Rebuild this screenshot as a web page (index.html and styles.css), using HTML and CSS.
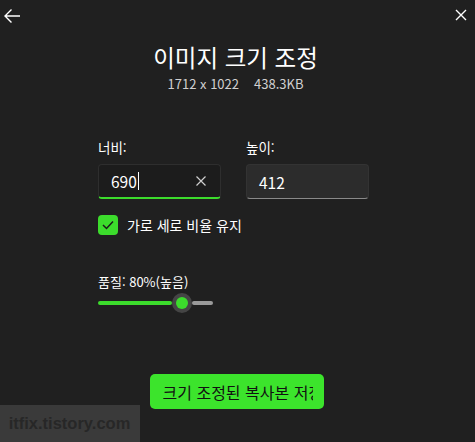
FILE: index.html
```html
<!DOCTYPE html>
<html lang="ko">
<head>
    <meta charset="UTF-8">
    <title>이미지 크기 조정</title>
    <link rel="stylesheet" href="styles.css">
</head>
<body>
    <div class="window">
        <div class="topbar">
            <span class="back">
                <svg width="18" height="16" viewBox="0 0 18 16"><path d="M17 8H2M8.5 1.5L2 8l6.5 6.5" fill="none" stroke="#fff" stroke-width="1.4"/></svg>
            </span>
            <span class="close">
                <svg width="12" height="12" viewBox="0 0 12 12"><path d="M1 1l10 10M11 1L1 11" stroke="#fff" stroke-width="1.4"/></svg>
            </span>
        </div>

        <h1 class="title">이미지 크기 조정</h1>
        <div class="info"><span>1712 x 1022</span><span>438.3KB</span></div>

        <div class="form">
            <div class="fields">
                <div class="field">
                    <label>너비:</label>
                    <div class="input active">
                        <span class="value">690<span class="caret"></span></span>
                        <svg class="clear" width="10" height="10" viewBox="0 0 10 10"><path d="M0.5 0.5l9 9M9.5 0.5l-9 9" stroke="#cfcfcf" stroke-width="1.2"/></svg>
                    </div>
                </div>
                <div class="field">
                    <label>높이:</label>
                    <div class="input">
                        <span class="value">412</span>
                    </div>
                </div>
            </div>

            <div class="check-row">
                <span class="checkbox">
                    <svg width="12" height="10" viewBox="0 0 12 10"><path d="M1 5l3.5 3.5L11 1.5" fill="none" stroke="#1a1a1a" stroke-width="1.5"/></svg>
                </span>
                <span>가로 세로 비율 유지</span>
            </div>

            <div class="quality">
                <div class="quality-label">품질: 80%(높음)</div>
                <div class="slider">
                    <div class="fill"></div>
                    <div class="thumb"><span></span></div>
                    <div class="rest"></div>
                </div>
            </div>
        </div>

        <div class="actions">
            <button class="primary"><span>크기 조정된 복사본 저장</span></button>
        </div>

        <div class="watermark">itfix.tistory.com</div>
    </div>
</body>
</html>
```

FILE: styles.css
```css
body {
    margin: 0;
    background-color: #202020;
    font-family: "Noto Sans CJK KR", "Liberation Sans", sans-serif;
    color: #ffffff;
}

.window {
    position: relative;
    width: 475px;
    height: 442px;
    overflow: hidden;
}

.topbar {
    display: flex;
    justify-content: space-between;
    align-items: center;
    height: 32px;
    padding: 0 8px 0 3px;
}

.back {
    display: flex;
}

.close {
    display: flex;
    margin-top: -2px;
}

.title {
    margin: 7px 0 0;
    text-align: center;
    font-size: 23.5px;
    font-weight: normal;
    line-height: 36px;
    padding-right: 4px;
}

.info {
    display: flex;
    justify-content: center;
    gap: 15px;
    font-size: 13px;
    line-height: 16px;
    color: #d0d0d0;
    margin-top: 1px;
    padding-right: 4px;
}

.form {
    margin: 46px 0 0 98px;
    width: 272px;
}

.fields {
    display: flex;
    gap: 25px;
}

.field {
    display: flex;
    flex-direction: column;
    width: 123px;
}

.field label {
    font-size: 13.5px;
    line-height: 18px;
    margin-bottom: 8px;
}

.input {
    display: flex;
    align-items: center;
    justify-content: space-between;
    height: 33px;
    padding: 0 14px 0 12px;
    background-color: #2c2c2c;
    border: 1px solid #333333;
    border-bottom-color: #8a8a8a;
    border-radius: 4px;
    font-size: 15.5px;
}

.input.active {
    background-color: #1c1c1c;
    border-color: #2e2e2e;
    border-bottom: 2px solid #3cdc2c;
    height: 32px;
    padding-left: 12px;
}

.value {
    display: flex;
    align-items: center;
}

.caret {
    display: inline-block;
    width: 1px;
    height: 18px;
    background-color: #ffffff;
    margin-left: 1px;
}

.check-row {
    display: flex;
    align-items: center;
    gap: 9px;
    margin-top: 16px;
    font-size: 14px;
}

.checkbox {
    display: flex;
    align-items: center;
    justify-content: center;
    width: 20px;
    height: 20px;
    border-radius: 4px;
    background-color: #3cdc2c;
}

.quality {
    margin-top: 38px;
}

.quality-label {
    font-size: 13px;
    line-height: 18px;
}

.slider {
    display: flex;
    align-items: center;
    width: 115px;
    height: 20px;
    margin-top: 2px;
}

.fill {
    width: 74px;
    height: 4px;
    border-radius: 2px;
    background-color: #3cdc2c;
}

.thumb {
    display: flex;
    align-items: center;
    justify-content: center;
    width: 20px;
    height: 20px;
    border-radius: 50%;
    background-color: #454545;
    flex-shrink: 0;
}

.thumb span {
    width: 12px;
    height: 12px;
    border-radius: 50%;
    background-color: #3cdc2c;
}

.rest {
    flex: 1;
    height: 4px;
    border-radius: 2px;
    background-color: #9a9a9a;
}

.actions {
    display: flex;
    justify-content: center;
    margin-top: 61px;
    padding-right: 2px;
}

.primary {
    width: 174px;
    height: 35px;
    border: none;
    border-radius: 5px;
    background-color: #3ce42c;
    color: #111111;
    font-family: "Noto Sans CJK KR", "Liberation Sans", sans-serif;
    font-size: 16px;
    padding: 0 0 0 13px;
    text-align: left;
    overflow: hidden;
    white-space: nowrap;
}

.primary span {
    display: block;
    width: 150px;
    overflow: hidden;
}

.watermark {
    position: absolute;
    left: 0;
    top: 405px;
    width: 140px;
    height: 37px;
    background-color: #3a3a3a;
    color: #272727;
    font-family: "Liberation Sans", sans-serif;
    font-weight: bold;
    font-size: 16.5px;
    line-height: 37px;
    text-align: center;
    padding-right: 1px;
    box-sizing: border-box;
}
```
